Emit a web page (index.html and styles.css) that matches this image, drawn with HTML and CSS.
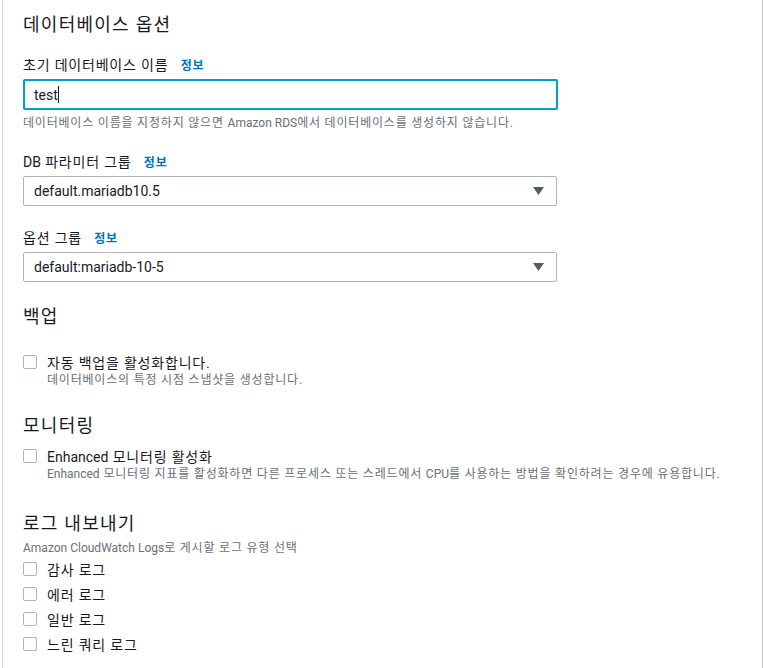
FILE: index.html
```html
<!DOCTYPE html>
<html lang="ko">
<head>
<meta charset="utf-8">
<title>데이터베이스 옵션</title>
<link rel="stylesheet" href="styles.css">
</head>
<body>
<div class="panel">
  <h2 class="heading">데이터베이스 옵션</h2>

  <div class="field field-first">
    <div class="label">초기 데이터베이스 이름 <a class="info">정보</a></div>
    <div class="input"><span class="value">test</span><span class="caret"></span></div>
    <div class="hint">데이터베이스 이름을 지정하지 않으면 <span class="latin">Amazon RDS</span>에서 데이터베이스를 생성하지 않습니다.</div>
  </div>

  <div class="field field-second">
    <div class="label"><span class="latin">DB</span> 파라미터 그룹 <a class="info">정보</a></div>
    <div class="select">
      <span class="value">default.mariadb10.5</span>
      <svg class="arrow" width="11" height="8" viewBox="0 0 11 8"><path d="M0 0H11L5.5 8Z" fill="#545b64"/></svg>
    </div>
  </div>

  <div class="field field-third">
    <div class="label">옵션 그룹 <a class="info">정보</a></div>
    <div class="select">
      <span class="value">default:mariadb-10-5</span>
      <svg class="arrow" width="11" height="8" viewBox="0 0 11 8"><path d="M0 0H11L5.5 8Z" fill="#545b64"/></svg>
    </div>
  </div>

  <h2 class="heading section-backup">백업</h2>
  <div class="check check-backup">
    <span class="box"></span>
    <div class="check-text">
      <div class="check-label">자동 백업을 활성화합니다.</div>
      <div class="hint">데이터베이스의 특정 시점 스냅샷을 생성합니다.</div>
    </div>
  </div>

  <h2 class="heading section-monitor">모니터링</h2>
  <div class="check check-monitor">
    <span class="box"></span>
    <div class="check-text">
      <div class="check-label"><span class="latin">Enhanced</span> 모니터링 활성화</div>
      <div class="hint"><span class="latin">Enhanced</span> 모니터링 지표를 활성화하면 다른 프로세스 또는 스레드에서 <span class="latin">CPU</span>를 사용하는 방법을 확인하려는 경우에 유용합니다.</div>
    </div>
  </div>

  <h2 class="heading section-logs">로그 내보내기</h2>
  <div class="hint logs-hint"><span class="latin">Amazon CloudWatch Logs</span>로 게시할 로그 유형 선택</div>
  <div class="log-list">
    <div class="check"><span class="box"></span><div class="check-label">감사 로그</div></div>
    <div class="check"><span class="box"></span><div class="check-label">에러 로그</div></div>
    <div class="check"><span class="box"></span><div class="check-label">일반 로그</div></div>
    <div class="check"><span class="box"></span><div class="check-label">느린 쿼리 로그</div></div>
  </div>
</div>
</body>
</html>
```

FILE: styles.css
```css
html, body {
  margin: 0;
  padding: 0;
  background: #ffffff;
}

body {
  font-family: Roboto, "Noto Sans CJK KR", sans-serif;
  color: #16191f;
  letter-spacing: 0.05em;
}

.latin,
.value {
  letter-spacing: 0;
}

.panel {
  margin-left: 2px;
  width: 761px;
  min-height: 668px;
  box-sizing: border-box;
  border-left: 1px solid #d5d8d8;
  border-right: 1px solid #c4c4c4;
  padding: 14px 0 0 20px;
  display: flex;
  flex-direction: column;
}

.heading {
  margin: 0;
  font-size: 18px;
  line-height: 22px;
  font-weight: 400;
  letter-spacing: 0.07em;
  color: #16191f;
}

.field {
  display: flex;
  flex-direction: column;
}

.field-first {
  margin-top: 19px;
}

.field-second {
  margin-top: 21px;
}

.field-third {
  margin-top: 22px;
}

.label {
  height: 20px;
  font-size: 14px;
  line-height: 20px;
  color: #16191f;
  overflow: visible;
}

.info {
  margin-left: 8px;
  font-size: 12px;
  line-height: 12px;
  font-weight: 700;
  color: #0073bb;
  text-decoration: none;
}

.input,
.select {
  box-sizing: border-box;
  display: flex;
  align-items: center;
  font-size: 14px;
  color: #16191f;
  margin-top: 4px;
}

.input {
  width: 535px;
  height: 31px;
  border: 2px solid #00a1c9;
  border-radius: 2px;
  padding-left: 9px;
}

.caret {
  display: inline-block;
  width: 1px;
  height: 17px;
  background: #16191f;
}

.select {
  width: 534px;
  height: 30px;
  border: 1px solid #aab7b8;
  border-radius: 2px;
  padding: 0 12px 0 10px;
  justify-content: space-between;
}

.hint {
  font-size: 12px;
  line-height: 16px;
  color: #687078;
}

.field-first .hint {
  margin-top: 5px;
}

.section-backup {
  margin-top: 24px;
}

.section-monitor {
  margin-top: 27px;
}

.section-logs {
  margin-top: 31px;
}

.check {
  display: flex;
  align-items: flex-start;
  gap: 10px;
}

.check-backup {
  margin-top: 26px;
}

.check-monitor {
  margin-top: 11px;
}

.box {
  flex: none;
  width: 14px;
  height: 14px;
  box-sizing: border-box;
  border: 1px solid #aab7b8;
  border-radius: 2px;
  margin-top: 1px;
  background: #fff;
}

.check-label {
  font-size: 14px;
  line-height: 18px;
  color: #16191f;
}

.check-text {
  display: flex;
  flex-direction: column;
}

.logs-hint {
  margin-top: 5px;
}

.log-list {
  display: flex;
  flex-direction: column;
  gap: 7px;
  margin-top: 5px;
}
```
